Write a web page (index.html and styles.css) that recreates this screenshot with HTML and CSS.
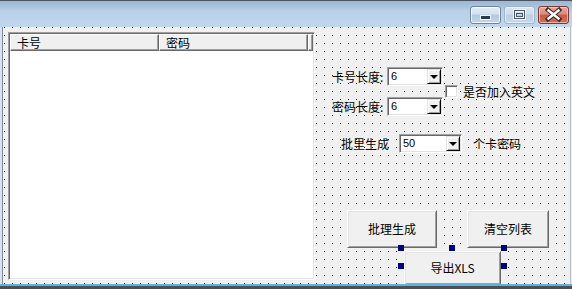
FILE: index.html
```html
<!DOCTYPE html>
<html>
<head>
<meta charset="utf-8">
<link rel="stylesheet" href="styles.css">
</head>
<body>
<div class="window">
  <div class="titlebar">
    <div class="caption-buttons">
      <div class="cbtn min">
        <svg width="31" height="18" viewBox="0 0 31 18"><rect x="10.5" y="9.5" width="10" height="4" fill="#2b3b4f" stroke="#f4f8fc" stroke-width="1"/></svg>
      </div>
      <div class="cbtn max">
        <svg width="31" height="18" viewBox="0 0 31 18"><rect x="10.5" y="4.5" width="10" height="8" fill="none" stroke="#f2f6fa" stroke-width="3"/><rect x="10.5" y="4.5" width="10" height="8" fill="none" stroke="#4a5766" stroke-width="1"/><rect x="12.5" y="7.5" width="6" height="3" fill="none" stroke="#4a5766" stroke-width="1"/></svg>
      </div>
      <div class="cbtn close">
        <svg width="31" height="18" viewBox="0 0 31 18"><path d="M10 4 L21 13 M21 4 L10 13" stroke="#3a2a28" stroke-width="4.5" stroke-linecap="square"/><path d="M10.5 4.5 L20.5 12.5 M20.5 4.5 L10.5 12.5" stroke="#ffffff" stroke-width="2.4" stroke-linecap="square"/></svg>
      </div>
    </div>
  </div>
  <div class="frame">
    <div class="client">
      <div class="listview">
        <div class="lv-header">
          <div class="lv-col c1">卡号</div>
          <div class="lv-col c2">密码</div>
          <div class="lv-col c3"></div>
        </div>
        <div class="lv-body"></div>
      </div>
      <div class="panel">
        <div class="row r1">
          <span class="lbl">卡号长度:</span>
          <div class="combo w56"><span class="val">6</span><span class="drop"><span class="arrow"></span></span></div>
        </div>
        <div class="checkrow">
          <span class="check"></span><span class="checktext">是否加入英文</span>
        </div>
        <div class="row r2">
          <span class="lbl">密码长度:</span>
          <div class="combo w56"><span class="val">6</span><span class="drop"><span class="arrow"></span></span></div>
        </div>
        <div class="row r3">
          <span class="lbl lbl2">批里生成</span>
          <div class="combo w63"><span class="val">50</span><span class="drop"><span class="arrow"></span></span></div>
          <span class="suffix">个卡密码</span>
        </div>
        <div class="btnrow">
          <div class="btn b1">批理生成</div>
          <div class="btn b2">清空列表</div>
        </div>
        <div class="btnrow2">
          <div class="selected">
            <div class="btn b3">导出XLS</div>
            <span class="handle h-tl"></span>
            <span class="handle h-tm"></span>
            <span class="handle h-tr"></span>
            <span class="handle h-ml"></span>
            <span class="handle h-mr"></span>
          </div>
        </div>
      </div>
    </div>
  </div>
  <div class="bottom"></div>
</div>
</body>
</html>
```

FILE: styles.css
```css
* { box-sizing: border-box; }
html, body { margin: 0; padding: 0; }
body {
  width: 572px;
  height: 289px;
  overflow: hidden;
  font-family: "Noto Sans CJK SC", "DejaVu Sans", sans-serif;
  font-size: 12px;
  line-height: 14px;
  color: #000;
}
.window {
  width: 572px;
  height: 289px;
  display: flex;
  flex-direction: column;
  overflow: hidden;
}
.titlebar {
  height: 27px;
  flex: none;
  position: relative;
  border-top: 1px solid #4a5460;
  background: linear-gradient(#9db7d4 0px, #a8c1dc 5px, #b9d0e9 10px, #c0d6ed 100%);
  display: flex;
  justify-content: flex-end;
  padding: 5px 3px 0 0;
}
.caption-buttons {
  display: flex;
  gap: 3px;
  height: 18px;
}
.cbtn {
  width: 31px;
  height: 18px;
  border-radius: 3px;
  overflow: hidden;
}
.cbtn svg { display: block; }
.cbtn.min {
  border: 1px solid #6e849c;
  box-shadow: inset 0 0 0 1px rgba(255,255,255,0.75);
  background: linear-gradient(#e4edf7 0%, #d2e0ef 45%, #b3c8e0 50%, #c2d6eb 100%);
}
.cbtn.min svg, .cbtn.max svg, .cbtn.close svg { margin: -1px 0 0 -1px; }
.cbtn.max {
  border: 1px solid #9fb3c9;
  box-shadow: inset 0 0 0 1px rgba(255,255,255,0.5);
  background: linear-gradient(#dbe6f2 0%, #cddcec 45%, #bccfe4 50%, #c6d8ec 100%);
}
.cbtn.close {
  border: 1px solid #7b3a32;
  box-shadow: inset 0 0 0 1px rgba(255,220,210,0.6);
  background: linear-gradient(#e6a597 0%, #d98c7e 45%, #c95a46 50%, #cf6f5c 100%);
}
.frame {
  height: 257px;
  flex: none;
  display: flex;
  padding-left: 4px;
  padding-right: 2px;
  background:
    linear-gradient(to right, #d6e2ef 0, #d6e2ef 2px, #7d8a98 2px, #7d8a98 3px, #eef2f6 3px, #eef2f6 4px, transparent 4px),
    linear-gradient(to left, #eaf0f6 0, #eaf0f6 1px, #b2bcc6 1px, #b2bcc6 2px, transparent 2px);
}
.client {
  flex: 1;
  height: 257px;
  overflow: hidden;
  display: flex;
  align-items: flex-start;
  background-color: #f0f0f0;
  background-image: conic-gradient(from 270deg at 1px 1px, #000 90deg, transparent 0);
  background-size: 8px 8px;
  background-position: 0 0;
}
.bottom {
  height: 5px;
  flex: none;
  border-top: 2px solid #58b2e2;
  background: #4c4f53;
}
/* List view */
.listview {
  margin: 5px 0 0 4px;
  width: 307px;
  height: 248px;
  flex: none;
  border-top: 1px solid #a0a0a0;
  border-left: 1px solid #a0a0a0;
  border-right: 1px solid #ffffff;
  border-bottom: 1px solid #ffffff;
  box-shadow: inset 1px 1px 0 #696969, inset -1px -1px 0 #e3e3e3;
  padding: 1px;
  background: #fff;
  display: flex;
  flex-direction: column;
}
.lv-header {
  display: flex;
  height: 17px;
  flex: none;
  background: #f0f0f0;
}
.lv-col {
  height: 17px;
  border-top: 1px solid #ffffff;
  border-left: 1px solid #ffffff;
  border-right: 1px solid #696969;
  border-bottom: 1px solid #696969;
  box-shadow: inset -1px -1px 0 #a0a0a0;
  padding: 1px 0 0 6px;
  line-height: 14px;
  white-space: nowrap;
}
.lv-col.c1 { width: 149px; }
.lv-col.c2 { width: 149px; }
.lv-col.c3 { flex: 1; padding: 0; }
.lv-body { flex: 1; background: #fff; }
/* Panel */
.panel {
  flex: 1;
  display: flex;
  flex-direction: column;
  padding-top: 40px;
}
.row {
  display: flex;
  align-items: center;
  height: 19px;
}
.r1, .r2 { padding-left: 17px; }
.lbl { width: 55px; flex: none; white-space: nowrap; }
.lbl2 { width: 58px; }
.r3 { padding-left: 26px; margin-top: 18px; }
.checkrow {
  height: 11px;
  display: flex;
  align-items: flex-start;
  padding-left: 130px;
  margin-top: 0;
}
.check {
  width: 13px;
  height: 13px;
  flex: none;
  margin-top: -1px;
  background: #fff;
  border-top: 1px solid #a0a0a0;
  border-left: 1px solid #a0a0a0;
  border-right: 1px solid #fff;
  border-bottom: 1px solid #fff;
  box-shadow: inset 1px 1px 0 #696969, inset -1px -1px 0 #e3e3e3;
}
.checktext {
  margin-left: 5px;
  line-height: 12px;
  position: relative;
  top: 0px;
  white-space: nowrap;
}
.combo {
  height: 19px;
  flex: none;
  display: flex;
  align-items: center;
  background: #fff;
  border-top: 1px solid #a0a0a0;
  border-left: 1px solid #a0a0a0;
  border-right: 1px solid #fff;
  border-bottom: 1px solid #fff;
  box-shadow: inset 1px 1px 0 #696969, inset -1px -1px 0 #e3e3e3;
  padding: 1px 1px 1px 3px;
  position: relative;
}
.w56 { width: 56px; }
.w63 { width: 63px; }
.val {
  flex: 1;
  font-family: "Liberation Sans", "Noto Sans CJK SC", sans-serif;
  font-size: 11px;
  line-height: 13px;
}
.drop {
  width: 14px;
  height: 15px;
  flex: none;
  margin-right: 0px;
  background: #f0f0f0;
  border-top: 1px solid #e3e3e3;
  border-left: 1px solid #e3e3e3;
  border-right: 1px solid #000;
  border-bottom: 1px solid #000;
  box-shadow: inset 1px 1px 0 #fff, inset -1px -1px 0 #a0a0a0;
  display: flex;
  align-items: center;
  justify-content: center;
}
.arrow {
  width: 0;
  height: 0;
  border-left: 4px solid transparent;
  border-right: 4px solid transparent;
  border-top: 4px solid #000;
  margin-top: 1px;
}
.suffix { margin-left: 11px; white-space: nowrap; }
/* Buttons */
.btnrow {
  display: flex;
  gap: 30px;
  padding-left: 32px;
  margin-top: 57px;
}
.btn {
  height: 38px;
  display: flex;
  align-items: center;
  justify-content: center;
  background: #f0f0f0;
  border-top: 1px solid #ffffff;
  border-left: 1px solid #ffffff;
  border-right: 1px solid #696969;
  border-bottom: 1px solid #696969;
  box-shadow: inset 1px 1px 0 #e3e3e3, inset -1px -1px 0 #a0a0a0;
  white-space: nowrap;
  flex: none;
}
.b1 { width: 90px; }
.b2 { width: 82px; }
.btnrow2 {
  padding-left: 89px;
  margin-top: 3px;
  display: flex;
}
.selected { position: relative; }
.b3 { width: 97px; height: 34px; }
.handle {
  position: absolute;
  width: 6px;
  height: 6px;
  background: #000080;
}
.h-tl { left: -6px; top: -6px; }
.h-tm { left: 45px; top: -6px; }
.h-tr { left: 97px; top: -6px; }
.h-ml { left: -6px; top: 12px; }
.h-mr { left: 97px; top: 12px; }
```
